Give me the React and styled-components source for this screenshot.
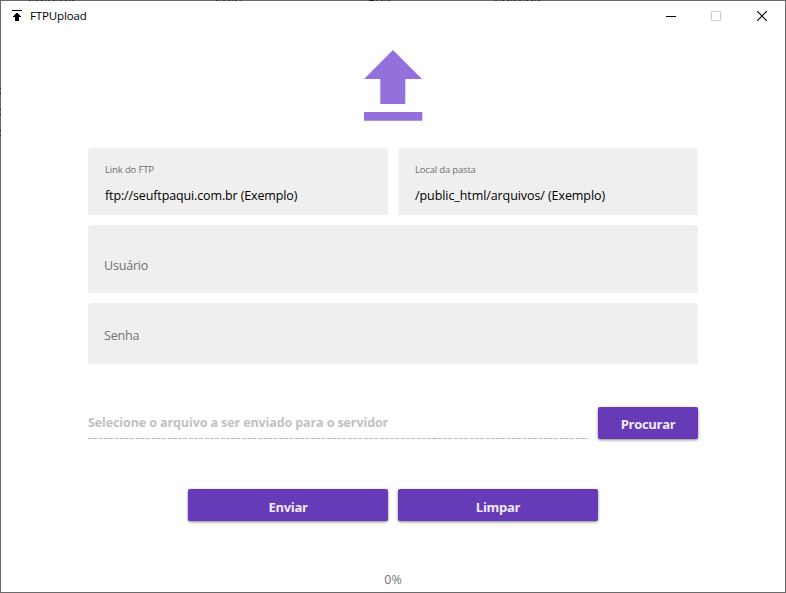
import React from 'react';
import styled, { createGlobalStyle } from 'styled-components';

const GlobalStyle = createGlobalStyle`
  * { box-sizing: border-box; }
  body { margin: 0; background: #fff; overflow: hidden; }
`;

const Window = styled.div`
  position: relative;
  width: 786px;
  height: 593px;
  display: flex;
  flex-direction: column;
  border: 1px solid #6b696b;
  background: #fff;
  font-family: 'Open Sans', 'Noto Sans', sans-serif;
  font-size: 12.5px;
`;

const EdgeMarks = styled.svg`
  position: absolute;
  left: -1px;
  top: -1px;
  pointer-events: none;
`;

const TitleBar = styled.header`
  height: 29px;
  flex: none;
  display: flex;
  align-items: center;
  padding-left: 10px;
`;

const Title = styled.span`
  flex: 1;
  margin-left: 7px;
  font-size: 11.5px;
  line-height: 16px;
  letter-spacing: -0.12px;
  color: #000;
`;

const WindowButton = styled.button`
  width: 45.5px;
  height: 29px;
  padding: 0 ${({ $nudge = 0 }) => $nudge}px 0 0;
  border: 0;
  background: none;
  display: flex;
  align-items: center;
  justify-content: center;
`;

const Content = styled.main`
  width: 610px;
  flex: 1;
  margin: 0 0 0 87px;
  display: flex;
  flex-direction: column;
`;

const Logo = styled.svg`
  flex: none;
  margin: 18px 0 0 274px;
`;

const FieldRow = styled.div`
  display: flex;
  gap: 10px;
  margin-top: ${({ $top }) => $top}px;
`;

const Field = styled.label`
  flex: 1;
  height: ${({ $height }) => $height}px;
  padding: ${({ $padding }) => $padding};
  background: #efefef;
  border-radius: 4px 4px 0 0;
  white-space: nowrap;
`;

const Caption = styled.span`
  display: block;
  font-size: 9.5px;
  line-height: 14px;
  letter-spacing: ${({ $spacing }) => $spacing}px;
  color: #707070;
`;

const Value = styled.span`
  display: block;
  margin-top: 10px;
  line-height: 18px;
  letter-spacing: ${({ $spacing }) => $spacing}px;
  color: #000;
`;

const Placeholder = styled.span`
  display: block;
  line-height: 18px;
  letter-spacing: -0.2px;
  color: #717171;
`;

const FileRow = styled.div`
  display: flex;
  gap: 10px;
  margin-top: 43px;
`;

const FilePicker = styled.div`
  width: 500px;
  height: 33px;
  padding-top: 7px;
  font-weight: 700;
  line-height: 18px;
  letter-spacing: -0.105px;
  white-space: nowrap;
  color: #c1c1c1;
  background: repeating-linear-gradient(90deg, #bdbdbd 0 4px, transparent 4px 5.3px)
    0 31px / 100% 1px no-repeat;
`;

const Button = styled.button`
  width: ${({ $width }) => $width}px;
  height: 32px;
  padding: ${({ $textTop = 3 }) => $textTop}px 0 0;
  border: 0;
  border-radius: 2px;
  background: #673ab7;
  box-shadow: 0 1px 3px rgba(0, 0, 0, 0.5);
  color: #f0ebf8;
  font: 700 13px/18px 'Open Sans', 'Noto Sans', sans-serif;
  letter-spacing: -0.3px;
`;

const Actions = styled.div`
  display: flex;
  justify-content: center;
  gap: 10px;
  margin-top: 49px;
`;

const Progress = styled.div`
  margin-top: 50px;
  line-height: 18px;
  text-align: center;
  color: #767676;
`;

export default function App() {
  return (
    <>
      <GlobalStyle />
      <Window>
        <EdgeMarks width="786" height="140" shapeRendering="crispEdges">
          <path
            d="M29 .5H77M216 .5H241M369 .5H391M495 .5H543"
            stroke="#353535"
            strokeDasharray="2 2 1 2 2 3"
          />
          <path
            d="M369 .5h5M0 88.5h1M0 93.5h1M0 109.5h1M0 114.5h1M0 130.5h1M0 135.5h1"
            stroke="#222"
          />
        </EdgeMarks>
        <TitleBar>
          <svg width="12" height="12" shapeRendering="crispEdges">
            <path d="M1 0h10v1H1zM5 3h2v1h1v1h1v1h1v1H8v4H4V7H2V6h1V5h1V4h1z" />
          </svg>
          <Title>FTPUpload</Title>
          <WindowButton aria-label="Minimizar">
            <svg width="10" height="10"><path d="M0 5.5h10" stroke="#000" /></svg>
          </WindowButton>
          <WindowButton aria-label="Maximizar" $nudge={2} disabled>
            <svg width="10" height="10"><path d="M.5.5h9v9h-9z" fill="none" stroke="#ccc" /></svg>
          </WindowButton>
          <WindowButton aria-label="Fechar">
            <svg width="10" height="10"><path d="M0 0l10 10M10 0L0 10" stroke="#000" strokeWidth="1.1" /></svg>
          </WindowButton>
        </TitleBar>
        <Content>
          <Logo width="62" height="74" fill="#9370db">
            <path d="M31 2L60 31H43.3V56H18.3V31H2zM2 64h58.3v8.7H2z" />
          </Logo>
          <FieldRow $top={26}>
            <Field $height={67} $padding="15px 17px 0">
              <Caption $spacing={-0.15}>Link do FTP</Caption>
              <Value $spacing={-0.13}>ftp://seuftpaqui.com.br (Exemplo)</Value>
            </Field>
            <Field $height={67} $padding="15px 17px 0">
              <Caption $spacing={-0.18}>Local da pasta</Caption>
              <Value $spacing={-0.08}>/public_html/arquivos/ (Exemplo)</Value>
            </Field>
          </FieldRow>
          <FieldRow $top={10}>
            <Field $height={68} $padding="32px 16px 0">
              <Placeholder>Usuário</Placeholder>
            </Field>
          </FieldRow>
          <FieldRow $top={10}>
            <Field $height={61} $padding="24px 16px 0">
              <Placeholder>Senha</Placeholder>
            </Field>
          </FieldRow>
          <FileRow>
            <FilePicker>Selecione o arquivo a ser enviado para o servidor</FilePicker>
            <Button $width={100} $textTop={1}>Procurar</Button>
          </FileRow>
          <Actions>
            <Button $width={200}>Enviar</Button>
            <Button $width={200}>Limpar</Button>
          </Actions>
          <Progress>0%</Progress>
        </Content>
      </Window>
    </>
  );
}
